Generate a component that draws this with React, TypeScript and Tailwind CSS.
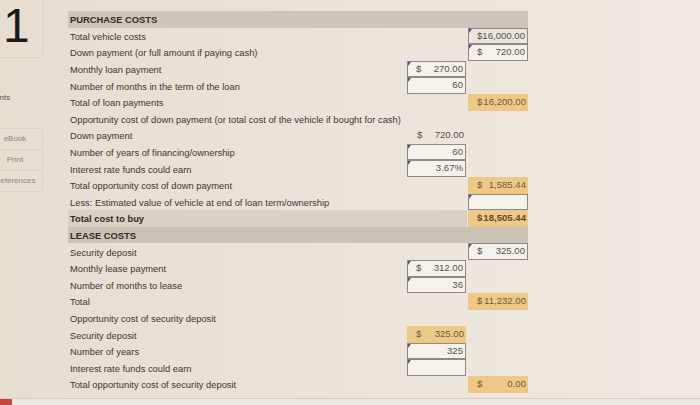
import React from "react";

type Cell = {
  kind: "input" | "orange" | "plain";
  dollar?: boolean;
  value?: string;
  bold?: boolean;
  gray?: boolean;
};

type Row = {
  label: string;
  band?: "head" | "sub" | "lease";
  bold?: boolean;
  mid?: Cell;
  right?: Cell;
};

const rows: Row[] = [
  { label: "PURCHASE COSTS", band: "head", bold: true },
  { label: "Total vehicle costs", right: { kind: "input", dollar: true, value: "16,000.00", gray: true } },
  { label: "Down payment (or full amount if paying cash)", right: { kind: "input", dollar: true, value: "720.00" } },
  { label: "Monthly loan payment", mid: { kind: "input", dollar: true, value: "270.00" } },
  { label: "Number of months in the term of the loan", mid: { kind: "input", value: "60" } },
  { label: "Total of loan payments", right: { kind: "orange", dollar: true, value: "16,200.00" } },
  { label: "Opportunity cost of down payment (or total cost of the vehicle if bought for cash)" },
  { label: "Down payment", mid: { kind: "plain", dollar: true, value: "720.00" } },
  { label: "Number of years of financing/ownership", mid: { kind: "input", value: "60" } },
  { label: "Interest rate funds could earn", mid: { kind: "input", value: "3.67%" } },
  { label: "Total opportunity cost of down payment", right: { kind: "orange", dollar: true, value: "1,585.44" } },
  { label: "Less: Estimated value of vehicle at end of loan term/ownership", right: { kind: "input", value: "" } },
  { label: "Total cost to buy", band: "sub", bold: true, right: { kind: "orange", dollar: true, value: "18,505.44", bold: true } },
  { label: "LEASE COSTS", band: "lease", bold: true },
  { label: "Security deposit", right: { kind: "input", dollar: true, value: "325.00" } },
  { label: "Monthly lease payment", mid: { kind: "input", dollar: true, value: "312.00" } },
  { label: "Number of months to lease", mid: { kind: "input", value: "36" } },
  { label: "Total", right: { kind: "orange", dollar: true, value: "11,232.00" } },
  { label: "Opportunity cost of security deposit" },
  { label: "Security deposit", mid: { kind: "orange", dollar: true, value: "325.00" } },
  { label: "Number of years", mid: { kind: "input", value: "325" } },
  { label: "Interest rate funds could earn", mid: { kind: "input", value: "" } },
  { label: "Total opportunity cost of security deposit", right: { kind: "orange", dollar: true, value: "0.00" } },
];

function CellView({ cell }: { cell?: Cell }) {
  if (!cell) return null;
  const content = (
    <>
      <span>{cell.dollar ? "$" : ""}</span>
      <span>{cell.value}</span>
    </>
  );
  if (cell.kind === "input") {
    return (
      <div
        className={
          "relative h-full flex items-center justify-between pl-[8px] pr-[2px] border border-[#8e8984] text-[#57524d] " +
          (cell.gray ? "bg-[#ebe6df]" : "bg-[#f5f1eb]")
        }
      >
        <span className="absolute top-0 left-0 w-0 h-0 border-t-[4px] border-t-[#4e5290] border-r-[3px] border-r-transparent" />
        {content}
      </div>
    );
  }
  if (cell.kind === "orange") {
    return (
      <div
        className={
          "h-full flex items-center justify-between pl-[9px] pr-[2px] bg-[#efc886] " +
          (cell.bold ? "font-bold text-[#5e4a34]" : "text-[#6e5a44]")
        }
      >
        {content}
      </div>
    );
  }
  return (
    <div className="h-full flex items-center justify-between pl-[10px] pr-[2px] text-[#57524d]">
      {content}
    </div>
  );
}

function RowView({ row }: { row: Row }) {
  const labelBand =
    row.band === "head"
      ? "bg-[#cdc6ba]"
      : row.band === "sub"
      ? "bg-[#d8d1c5]"
      : row.band === "lease"
      ? "bg-[#cac3b6]"
      : "";
  const rightBand =
    row.band === "head" ? "bg-[#cdc6ba]" : row.band === "lease" ? "bg-[#cac3b6]" : "";
  return (
    <div className="flex h-[16.6px]">
      <div className={"flex w-[399px] " + labelBand}>
        <div
          className={
            "w-[339px] flex items-center pl-[2px] pt-[2px] whitespace-nowrap text-[9.35px] " +
            (row.bold ? "font-bold text-[#2f2b28]" : "text-[#3b3734]")
          }
        >
          {row.label}
        </div>
        <div className="w-[60px] pr-[1px]">
          <CellView cell={row.mid} />
        </div>
      </div>
      <div className={"w-[61px] pl-[1px] " + rightBand}>
        <CellView cell={row.right} />
      </div>
    </div>
  );
}

export default function App() {
  return (
    <div className="w-[700px] h-[405px] overflow-hidden flex flex-col bg-linear-to-r from-[#e7ded2] via-[#ebe4da] to-[#efe9e1] font-['Liberation_Sans',Arial,sans-serif] text-[9.6px]">
      <div className="h-[398px] flex">
        <div className="w-[46px] shrink-0 overflow-hidden flex flex-col">
          <div className="-ml-[6px] -mt-[4px] w-[50px] h-[62px] border border-[#dcd3c7] rounded-br-[6px] pl-[8px] pt-[5px]">
            <div className="text-[48px] leading-none text-[#1c1a19]">1</div>
          </div>
          <div className="mt-[36px] -ml-[8px] text-[8px] leading-none text-[#58534e]">Hints</div>
          <div className="mt-[26px] -ml-[13px] w-[56px] border border-[#dcd3c7] rounded-[4px] flex flex-col text-[8px] text-[#8c8781]">
            <div className="h-[21px] flex items-center justify-center border-b border-[#dcd3c7]">eBook</div>
            <div className="h-[21px] flex items-center justify-center border-b border-[#dcd3c7]">Print</div>
            <div className="h-[20px] flex items-center justify-center">References</div>
          </div>
        </div>
        <div className="ml-[22px] pt-[11px] flex flex-col">
          {rows.map((r, i) => (
            <RowView key={i} row={r} />
          ))}
        </div>
      </div>
      <div className="h-[7px] flex border-t border-[#d6cec3] bg-[#ece7e0]">
        <div className="w-[12px] h-full bg-[#c8453f]" />
      </div>
    </div>
  );
}
